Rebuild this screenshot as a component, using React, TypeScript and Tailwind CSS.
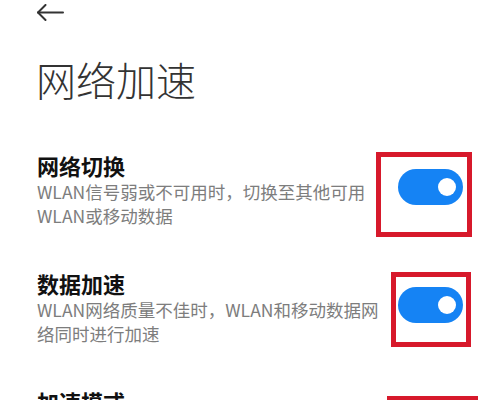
import React from "react";

const font = { fontFamily: '"Noto Sans CJK SC", "Noto Sans", sans-serif' };

function Toggle() {
  return (
    <div className="relative w-[65px] h-[36px] rounded-full bg-[#1583f4] shrink-0">
      <div className="absolute right-[7px] top-[9px] w-[18px] h-[18px] rounded-full bg-white" />
    </div>
  );
}

function Item({ title, desc }: { title: string; desc: string }) {
  return (
    <div className="flex items-center h-[78px]">
      <div className="w-[350px] shrink-0">
        <div className="text-[22px] leading-[30px] font-bold text-[#111]">{title}</div>
        <div className="text-[17.5px] leading-[24px] text-[#7d7d7d]">{desc}</div>
      </div>
      <div className="ml-[11px] -mt-[4px]">
        <Toggle />
      </div>
    </div>
  );
}

export default function App() {
  return (
    <div className="relative w-[500px] h-[400px] overflow-hidden bg-white" style={font}>
      <div className="pl-[37px] pt-[4px] h-[26px]">
        <svg width="28" height="18" viewBox="0 0 28 18" fill="none" stroke="#333" strokeWidth="2" strokeLinecap="round" strokeLinejoin="round">
          <path d="M1 8.5 H26" />
          <path d="M8.5 1 L1 8.5 L8.5 16" />
        </svg>
      </div>
      <div className="pl-[36px] mt-[29px] text-[40px] leading-[48px] font-light text-[#333]">网络加速</div>
      <div className="pl-[37px] mt-[47px] flex flex-col gap-[40px]">
        <Item title="网络切换" desc="WLAN信号弱或不可用时，切换至其他可用WLAN或移动数据" />
        <Item title="数据加速" desc="WLAN网络质量不佳时，WLAN和移动数据网络同时进行加速" />
        <div className="text-[22px] leading-[30px] font-bold text-[#111]">加速模式</div>
      </div>
      <div className="absolute left-[376px] top-[152px] w-[96px] h-[85px] border-[5px] border-[#d7192b]" />
      <div className="absolute left-[391px] top-[272px] w-[80px] h-[75px] border-[5px] border-[#d7192b]" />
      <div className="absolute left-[387px] top-[396px] w-[91px] h-[60px] border-[5px] border-[#d7192b]" />
    </div>
  );
}
